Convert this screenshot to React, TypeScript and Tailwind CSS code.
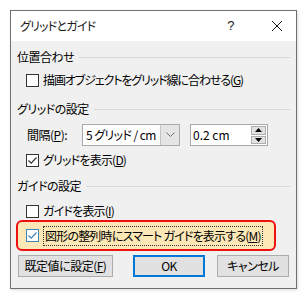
import React from "react";

const font = "[font-family:'Noto_Sans_CJK_JP','Noto_Sans',sans-serif] [font-feature-settings:'palt'] whitespace-nowrap tracking-[-0.5px]";

function Box({ checked, focus }: { checked?: boolean; focus?: boolean }) {
  return (
    <div
      className={
        "w-[13px] h-[13px] border flex items-center justify-center shrink-0 " +
        (focus ? "border-[#3f84b9] bg-white" : "border-[#333333] bg-white")
      }
    >
      {checked && (
        <svg width="11" height="11" viewBox="0 0 11 11">
          <path
            d="M1.5 5.5 L4.2 8.2 L9.5 2.5"
            fill="none"
            stroke={focus ? "#3f84b9" : "#333333"}
            strokeWidth="1.2"
          />
        </svg>
      )}
    </div>
  );
}

function Heading({ text }: { text: string }) {
  return (
    <div className="flex items-center h-[20px] pl-[6px] pr-[5px]">
      <span className="text-[12px] leading-[20px] text-[#000]">{text}</span>
      <div className="flex-1 h-px bg-[#d8d8d8] ml-[5px]" />
    </div>
  );
}

export default function App() {
  return (
    <div className={"w-[308px] h-[299px] bg-white pt-[10px] pl-[10px] " + font}>
      <div className="w-[287px] h-[279px] border border-[#707070] bg-[#f0f0f0] flex flex-col shadow-[1px_1px_3px_rgba(0,0,0,0.15)]">
        {/* title bar */}
        <div className="h-[30px] bg-white flex items-center pl-[9px] shrink-0">
          <span className="text-[12px] text-[#1a1a1a] leading-[16px] tracking-[-0.8px]">グリッドとガイド</span>
          <span className="ml-auto text-[13px] leading-[16px] text-[#1a1a1a] [font-family:'Liberation_Sans',sans-serif] mr-[37px]">?</span>
          <svg width="12" height="12" viewBox="0 0 12 12" className="mr-[13px]">
            <path d="M1 1 L11 11 M11 1 L1 11" stroke="#1a1a1a" strokeWidth="1" />
          </svg>
        </div>

        {/* body */}
        <div className="mt-[6px]">
          <Heading text="位置合わせ" />
        </div>
        <div className="mt-[3px] h-[20px] flex items-center pl-[15px]">
          <Box />
          <span className="ml-[4px] text-[12px] leading-[20px] tracking-[-1.1px]">
            描画オブジェクトをグリッド線に合わせる(<span className="underline">G</span>)
          </span>
        </div>

        <div className="mt-[9px]">
          <Heading text="グリッドの設定" />
        </div>
        <div className="mt-[5px] h-[22px] flex items-center pl-[16px]">
          <span className="text-[12px] leading-[20px] w-[55px]">
            間隔(<span className="underline">P</span>):
          </span>
          <div className="w-[98px] h-[22px] border border-[#a9a9a9] bg-white flex">
            <div className="flex-1 flex items-center pl-[3px] text-[12px] tracking-[-0.6px] overflow-hidden">5 グリッド / cm</div>
            <div className="w-[19px] h-full bg-[#e5e5e5] border-l border-[#c4c4c4] flex items-center justify-center shrink-0">
              <svg width="9" height="6" viewBox="0 0 9 6">
                <path d="M0.5 0.5 L4.5 4.5 L8.5 0.5" fill="none" stroke="#707070" strokeWidth="1" />
              </svg>
            </div>
          </div>
          <div className="ml-[10px] w-[78px] h-[22px] border border-[#a9a9a9] bg-white flex">
            <div className="flex-1 flex items-center pl-[2px] text-[12px] tracking-[0px]">0.2 cm</div>
            <div className="w-[16px] flex flex-col pr-px py-px gap-px">
              <div className="flex-1 bg-[#e1e1e1] border border-[#adadad] flex items-center justify-center">
                <svg width="7" height="4" viewBox="0 0 7 4">
                  <path d="M0 4 L3.5 0 L7 4 Z" fill="#000" />
                </svg>
              </div>
              <div className="flex-1 bg-[#e1e1e1] border border-[#adadad] flex items-center justify-center">
                <svg width="7" height="4" viewBox="0 0 7 4">
                  <path d="M0 0 L3.5 4 L7 0 Z" fill="#000" />
                </svg>
              </div>
            </div>
          </div>
        </div>
        <div className="mt-[4px] h-[20px] flex items-center pl-[15px]">
          <Box checked />
          <span className="ml-[4px] text-[12px] leading-[20px] tracking-[-0.8px]">
            グリッドを表示(<span className="underline">D</span>)
          </span>
        </div>

        <div className="mt-[6px]">
          <Heading text="ガイドの設定" />
        </div>
        <div className="mt-[6px] h-[18px] flex items-center pl-[15px]">
          <Box />
          <span className="ml-[4px] text-[12px] leading-[20px] tracking-[-0.8px]">
            ガイドを表示(<span className="underline">I</span>)
          </span>
        </div>

        <div className="mt-[0px] ml-[5px] w-[260px] h-[31px] border-2 border-[#ee1111] rounded-[6px] bg-[#fbe8b6] flex items-center pl-[8px]">
          <Box checked focus />
          <span className="ml-[4px] text-[12px] leading-[16px] px-[1px] py-px border border-dotted border-[#333] tracking-[-0.8px]">
            図形の整列時にスマート ガイドを表示する(<span className="underline">M</span>)
          </span>
        </div>

        <div className="mt-[4px] flex pl-[7px] h-[22px]">
          <button className="w-[95px] h-[22px] bg-[#e1e1e1] border border-[#adadad] text-[12px] leading-[18px]">
            既定値に設定(<span className="underline">F</span>)
          </button>
          <button className="ml-[20px] w-[72px] h-[22px] bg-[#e1e1e1] border-2 border-[#0078d7] text-[12px] leading-[18px]">
            OK
          </button>
          <button className="ml-[12px] w-[72px] h-[22px] bg-[#e1e1e1] border border-[#adadad] text-[12px] leading-[18px]">
            キャンセル
          </button>
        </div>
      </div>
    </div>
  );
}
